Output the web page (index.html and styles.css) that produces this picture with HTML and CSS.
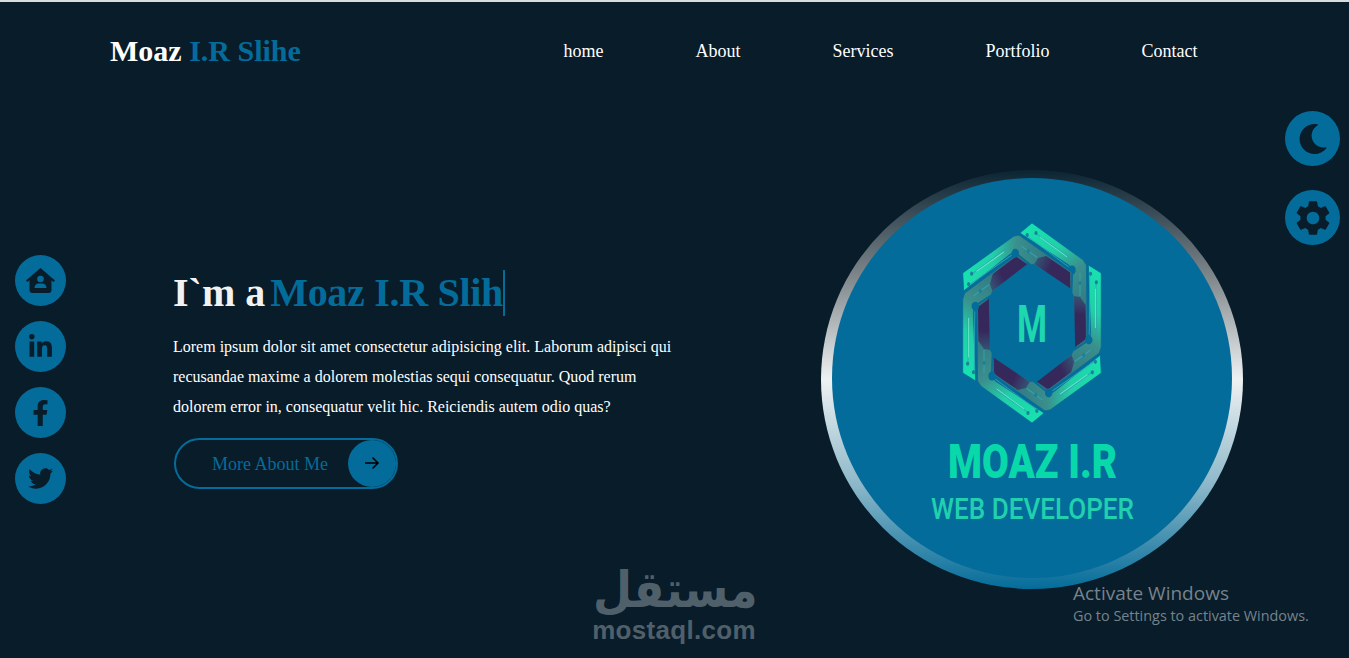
FILE: index.html
```html
<!DOCTYPE html>
<html lang="en">
<head>
<meta charset="utf-8">
<title>Moaz I.R Slihe</title>
<link rel="stylesheet" href="styles.css">
</head>
<body>
<header class="header">
  <a class="brand" href="#">Moaz <span class="accent">I.R Slihe</span></a>
  <nav class="nav">
    <a href="#">home</a>
    <a href="#">About</a>
    <a href="#">Services</a>
    <a href="#">Portfolio</a>
    <a href="#">Contact</a>
  </nav>
</header>

<main class="hero">
  <section class="intro">
    <h1 class="title">I`m a<span class="typed">Moaz I.R Slih</span></h1>
    <p class="lead">Lorem ipsum dolor sit amet consectetur adipisicing elit. Laborum adipisci qui recusandae maxime a dolorem molestias sequi consequatur. Quod rerum dolorem error in, consequatur velit hic. Reiciendis autem odio quas?</p>
    <a class="more" href="#">
      <span class="more-label">More About Me</span>
      <span class="more-arrow">
        <svg width="16" height="14" viewBox="0 0 16 14"><path class="arrow-line" d="M1 7h13M8.500 1.500 14 7l-5.500 5.500"/></svg>
      </span>
    </a>
  </section>

  <div class="portrait-ring">
    <div class="portrait">
      <svg class="logo" viewBox="0 0 400 400" width="400" height="400">
        <defs>
          <linearGradient id="seg" gradientUnits="userSpaceOnUse" x1="-5" y1="-100" x2="60" y2="10">
            <stop offset="0" stop-color="#16e3b0"/>
            <stop offset=".32" stop-color="#22cfa8"/>
            <stop offset=".55" stop-color="#3a8f8c"/>
            <stop offset="1" stop-color="#2f6f80"/>
          </linearGradient>
          <linearGradient id="dark" gradientUnits="userSpaceOnUse" x1="60" y1="-30" x2="60" y2="24">
            <stop offset="0" stop-color="#355a78"/>
            <stop offset=".4" stop-color="#37285c"/>
            <stop offset="1" stop-color="#35285a"/>
          </linearGradient>
          <g id="segment">
            <path class="seg-body" fill="url(#seg)" d="M-15-90 0-100 64-63 68-58 69 18 55 25 52-27 50-30 51-53 46-58Z"/>
            <path fill="url(#dark)" d="M52.500-27 60-26 67-18 67.500 16 54 24Z"/>
            <path class="trace" d="M-8-88 46-56M4-90 50-64M60-50 60-27"/>
            <path class="glint" d="M10-86 44-66"/>
            <circle class="pin" cx="-6" cy="-88" r="2"/>
            <circle class="pin" cx="5" cy="-90" r="2"/>
            <circle class="hole" cx="50" cy="-53" r="4.500"/>
            <circle class="pin" cx="60" cy="-40" r="2"/>
          </g>
        </defs>
        <g transform="translate(200 145) scale(.8 1)">
          <use href="#segment"/>
          <use href="#segment" transform="rotate(60)"/>
          <use href="#segment" transform="rotate(120)"/>
          <use href="#segment" transform="rotate(180)"/>
          <use href="#segment" transform="rotate(240)"/>
          <use href="#segment" transform="rotate(300)"/>
        </g>
        <text class="logo-m" x="200" y="164" text-anchor="middle" textLength="30" lengthAdjust="spacingAndGlyphs">M</text>
        <text class="logo-name" x="116" y="300" textLength="169" lengthAdjust="spacingAndGlyphs">MOAZ I.R</text>
        <text class="logo-role" x="99" y="341" textLength="203" lengthAdjust="spacingAndGlyphs">WEB DEVELOPER</text>
      </svg>
    </div>
  </div>
</main>

<aside class="rail rail-left">
  <a class="disc" href="#">
    <svg class="ico-home" viewBox="0 0 29 25"><path class="ink" d="M14.500 0 29 12.500l-1.500 1.500-2-1.700V22a3 3 0 0 1-3 3H6.500a3 3 0 0 1-3-3v-9.700L1.500 14 0 12.500Z"/><circle class="cut" cx="14.500" cy="11" r="3.300"/><path class="cut" d="M8.500 20c0-3 2-4.500 4-4.500h4c2 0 4 1.500 4 4.500Z"/></svg>
  </a>
  <a class="disc" href="#">
    <svg class="ico-in" viewBox="0 0 448 512"><path class="ink" d="M100.280 448H7.400V148.900h92.880zM53.790 108.100C24.090 108.100 0 83.500 0 53.800a53.790 53.790 0 0 1 107.580 0c0 29.700-24.100 54.300-53.790 54.300zM447.900 448h-92.680V302.400c0-34.700-.7-79.200-48.290-79.200-48.290 0-55.690 37.700-55.690 76.700V448h-92.780V148.900h89.080v40.800h1.300c12.400-23.500 42.690-48.300 87.880-48.300 94 0 111.280 61.900 111.280 142.300V448z"/></svg>
  </a>
  <a class="disc" href="#">
    <svg class="ico-fb" viewBox="0 0 320 512"><path class="ink" d="M279.140 288l14.220-92.660h-88.910v-60.130c0-25.350 12.420-50.060 52.240-50.060h40.420V6.260S260.430 0 225.360 0c-73.220 0-121.080 44.380-121.080 124.720v70.620H22.890V288h81.390v224h100.170V288z"/></svg>
  </a>
  <a class="disc" href="#">
    <svg class="ico-tw" viewBox="0 0 512 512"><path class="ink" d="M459.370 151.716c.325 4.548.325 9.097.325 13.645 0 138.720-105.583 298.558-298.558 298.558-59.452 0-114.680-17.219-161.137-47.106 8.447.974 16.568 1.299 25.340 1.299 49.055 0 94.213-16.568 130.274-44.832-46.132-.975-84.792-31.188-98.112-72.772 6.498.974 12.995 1.624 19.818 1.624 9.421 0 18.843-1.300 27.614-3.573-48.081-9.747-84.143-51.980-84.143-102.985v-1.299c13.969 7.797 30.214 12.670 47.431 13.319-28.264-18.843-46.781-51.005-46.781-87.391 0-19.492 5.197-37.360 14.294-52.954 51.655 63.675 129.300 105.258 216.365 109.807-1.624-7.797-2.599-15.918-2.599-24.040 0-57.828 46.782-104.934 104.934-104.934 30.213 0 57.502 12.670 76.670 33.137 23.715-4.548 46.456-13.320 66.599-25.340-7.798 24.366-24.366 44.833-46.132 57.827 21.117-2.273 41.584-8.122 60.426-16.243-14.292 20.791-32.161 39.308-52.628 54.253z"/></svg>
  </a>
</aside>

<aside class="rail rail-right">
  <a class="disc disc-lg" href="#">
    <svg class="ico-moon" viewBox="0 0 512 512"><path class="ink" d="M283.211 512c78.962 0 151.079-35.925 198.857-94.792 7.068-8.708-.639-21.430-11.562-19.350-124.203 23.654-238.262-71.576-238.262-196.954 0-72.222 38.662-138.635 101.498-174.394 9.686-5.512 7.250-20.197-3.756-22.230A258.156 258.156 0 0 0 283.211 0c-141.309 0-256 114.511-256 256 0 141.309 114.511 256 256 256z"/></svg>
  </a>
  <a class="disc disc-lg" href="#">
    <svg class="ico-gear" viewBox="0 0 24 24"><path class="ink" d="M19.140 12.940c.04-.3.06-.61.06-.94 0-.32-.02-.64-.07-.94l2.030-1.580c.18-.14.23-.41.12-.61l-1.920-3.320c-.12-.22-.37-.29-.59-.22l-2.390.96c-.5-.38-1.030-.7-1.620-.94l-.36-2.540c-.04-.24-.24-.41-.48-.41h-3.840c-.24 0-.43.17-.47.41l-.36 2.540c-.59.24-1.130.57-1.620.94l-2.390-.96c-.22-.08-.47 0-.59.22L2.740 8.870c-.12.21-.08.47.12.61l2.030 1.580c-.05.3-.09.63-.09.94s.02.64.07.94l-2.030 1.580c-.18.14-.23.41-.12.61l1.920 3.320c.12.22.37.29.59.22l2.390-.96c.5.38 1.030.7 1.620.94l.36 2.54c.05.24.24.41.48.41h3.840c.24 0 .44-.17.47-.41l.36-2.54c.59-.24 1.130-.56 1.620-.94l2.390.96c.22.08.47 0 .59-.22l1.920-3.320c.12-.22.07-.47-.12-.61l-2.010-1.580zM12 15.600c-1.980 0-3.600-1.620-3.600-3.600s1.620-3.600 3.600-3.600 3.600 1.620 3.600 3.600-1.620 3.600-3.600 3.600z"/></svg>
  </a>
</aside>

<div class="watermark">
  <div class="wm-ar" lang="ar" dir="rtl">مستقل</div>
  <div class="wm-en">mostaql.com</div>
</div>

<div class="activate">
  <div class="activate-head">Activate Windows</div>
  <div class="activate-sub">Go to Settings to activate Windows.</div>
</div>
</body>
</html>
```
FILE: styles.css
```css
* { box-sizing: border-box; }

html, body { height: 100%; }

body {
  margin: 0;
  position: relative;
  display: flex;
  flex-direction: column;
  overflow: hidden;
  background: #081c2a;
  color: #fff;
  font-family: "Liberation Serif", "Times New Roman", serif;
  border-top: 2px solid #d9dcde;
}

a { color: inherit; text-decoration: none; }

.header {
  flex: none;
  height: 98px;
  padding: 0 151.500px 0 110px;
  display: flex;
  align-items: center;
  justify-content: space-between;
}

.brand {
  font-size: 30px;
  font-weight: 700;
}

.accent { color: #046c9a; }

.nav {
  display: flex;
  gap: 92px;
  font-size: 18px;
}

.hero {
  flex: 1;
  display: flex;
  align-items: center;
  justify-content: space-between;
  padding: 0 106px 0 173px;
}

.intro { width: 510px; }

.title {
  margin: 0 0 16px;
  height: 46px;
  font-size: 40px;
  line-height: 46px;
  font-weight: 700;
  white-space: nowrap;
  color: #f2f2f2;
}

.typed {
  display: inline-block;
  margin-left: 5px;
  color: #046c9a;
  letter-spacing: -.3px;
  border-right: 2px solid #046c9a;
}

.lead {
  margin: 0 0 16px;
  font-size: 16px;
  line-height: 30px;
}

.more {
  width: 224px;
  height: 51px;
  margin-left: 1px;
  border: 2px solid #046c9a;
  border-radius: 26px;
  display: flex;
  align-items: center;
  justify-content: space-between;
  padding-left: 36px;
  color: #046c9a;
  font-size: 18px;
}

.more-label { margin-top: 2px; }

.more-arrow {
  width: 48px;
  height: 47px;
  border-radius: 50%;
  background: #046c9a;
  display: flex;
  align-items: center;
  justify-content: center;
}

.arrow-line {
  fill: none;
  stroke: #000;
  stroke-width: 1.600;
}

.portrait-ring {
  width: 422px;
  padding: 8px 11px 11px;
  border-radius: 50%;
  background: linear-gradient(#0b2433 0%, #7d8589 25%, #eef1f2 50%, #8db8c9 75%, #046c9a 100%);
}

.portrait {
  width: 400px;
  height: 400px;
  border-radius: 50%;
  background: #046c9a;
}

.logo { display: block; }

.seg-body {
  stroke: #046c9a;
  stroke-width: .8;
}

.trace {
  fill: none;
  stroke: #2fa6b4;
  stroke-width: 1;
}

.glint {
  fill: none;
  stroke: #6fe8cf;
  stroke-width: 1;
}

.pin { fill: #1b7f9d; }

.hole { fill: #046c9a; }

.logo-m,
.logo-name,
.logo-role {
  font-family: "Roboto", "Liberation Sans", sans-serif;
}

.logo-m {
  font-size: 52px;
  font-weight: 700;
  fill: #1ed7ae;
}

.logo-name {
  font-size: 49px;
  font-weight: 900;
  fill: #08d8aa;
}

.logo-role {
  font-size: 29px;
  font-weight: 500;
  fill: #20d0ae;
}

.rail {
  position: absolute;
  display: flex;
  flex-direction: column;
}

.rail-left {
  left: 15px;
  top: 253px;
  gap: 15px;
}

.rail-right {
  left: 1285px;
  top: 109px;
  gap: 24px;
}

.disc {
  width: 51px;
  height: 51px;
  border-radius: 50%;
  background: #046c9a;
  display: flex;
  align-items: center;
  justify-content: center;
}

.disc-lg {
  width: 55px;
  height: 55px;
}

.ink { fill: #081c2a; }
.cut { fill: #046c9a; }

.ico-home { width: 29px; height: 25px; }
.ico-in { width: 23px; height: 26px; }
.ico-fb { width: 17px; height: 26px; }
.ico-tw { width: 25px; height: 25px; }
.ico-moon { width: 30px; height: 30px; }
.ico-gear { width: 42px; height: 42px; }

.watermark {
  position: absolute;
  left: 590px;
  top: 562px;
  width: 168px;
  text-align: center;
  color: #50606a;
}

.wm-ar {
  height: 52px;
  font-family: "DejaVu Sans", sans-serif;
  font-size: 50px;
  font-weight: 700;
  line-height: 52px;
  transform: scaleX(.9);
  transform-origin: 165px 50%;
}

.wm-en {
  font-family: "Liberation Sans", Arial, sans-serif;
  font-size: 26px;
  font-weight: 700;
  line-height: 29px;
  letter-spacing: .3px;
  white-space: nowrap;
}

.activate {
  position: absolute;
  left: 1073px;
  top: 579px;
  color: #76838c;
  font-family: "Open Sans", "Noto Sans", sans-serif;
}

.activate-head {
  font-size: 19px;
  line-height: 24px;
}

.activate-sub {
  font-size: 14.400px;
  line-height: 22px;
}
```
